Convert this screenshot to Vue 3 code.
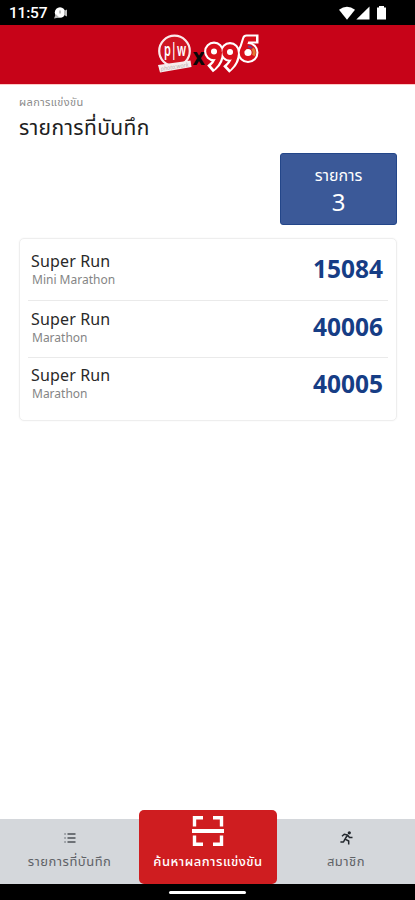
<script setup>
import { computed, ref } from 'vue'

const activeTab = ref('search')

const records = ref([
  { bib: '15084', event: 'Super Run', distance: 'Mini Marathon' },
  { bib: '40006', event: 'Super Run', distance: 'Marathon' },
  { bib: '40005', event: 'Super Run', distance: 'Marathon' },
])

const total = computed(() => records.value.length)
</script>

<template>
  <div class="screen">
    <div class="status-bar">
      <span class="clock">11:57</span>
      <svg class="status-note" width="16" height="14" viewBox="0 0 16 14">
        <circle cx="7" cy="6.5" r="5.2" fill="#fff" />
        <path d="M1 12.5 2.8 8l3.5 3.5zM11 5l3-1.5v7L11 9z" fill="#bbb" />
        <path d="M7 4.5v3" stroke="#888" stroke-width="1" />
      </svg>
      <svg class="status-icons" width="49" height="15" viewBox="0 0 49 15">
        <path d="M0 3.8Q8 -2.4 16 3.8L8 13.7z" fill="#fff" />
        <path d="M30.5.5v13H17.3z" fill="#fff" />
        <path d="M38 1.5h2V0h5v1.5h2v12h-9z" fill="#fff" />
      </svg>
    </div>

    <header class="brand">
      <svg width="104" height="48" viewBox="0 0 104 48">
        <circle cx="17.5" cy="19" r="15.3" fill="#cf1522" stroke="#fbeaea" stroke-width="2.2" />
        <text x="7" y="24" class="logo-pw" textLength="22" lengthAdjust="spacingAndGlyphs">p|w</text>
        <path d="M1 33 33.5 28.5 34.5 35 3 40.5z" fill="#f7eeee" />
        <text x="4" y="39" class="logo-sub" transform="rotate(-9 4 39)" textLength="28" lengthAdjust="spacingAndGlyphs">photo:work</text>
        <text x="35.5" y="33" class="logo-x" textLength="12.5" lengthAdjust="spacingAndGlyphs">x</text>
        <g fill="none" stroke-linejoin="round">
          <g stroke="#fff" stroke-width="9" stroke-linecap="square">
            <path d="M62.8 20Q62.5 29 56.5 34" />
            <circle cx="57" cy="19.5" r="5.4" />
            <path d="M78.8 20.5Q78.5 29 72.5 34.5" />
            <circle cx="73" cy="20" r="5.4" />
            <path d="M97 7H89.5L86 18" />
            <circle cx="91" cy="20.5" r="6" />
          </g>
          <g stroke="#d80f1c" stroke-width="4.8">
            <path d="M62.6 20Q62.5 29 55.5 35.5" />
            <circle cx="57" cy="19.5" r="5.4" />
            <path d="M78.6 20.5Q78.5 29 71.5 36" />
            <circle cx="73" cy="20" r="5.4" />
            <path d="M99 7H89.5L86 18" />
            <circle cx="91" cy="20.5" r="6" />
          </g>
          <g fill="#fff">
            <circle cx="57" cy="19.5" r="2.5" />
            <circle cx="73" cy="20" r="2.5" />
            <circle cx="91" cy="20.5" r="2.8" />
          </g>
          <path d="M95.5 16.5A6 6 0 0 1 96.4 23.5" stroke="#e07a35" stroke-width="3" />
          <path d="M91 14.5A6 6 0 0 1 95 16" stroke="#6b3f86" stroke-width="2" />
        </g>
      </svg>
    </header>

    <main class="content">
      <p class="eyebrow">ผลการแข่งขัน</p>
      <h1>รายการที่บันทึก</h1>

      <section class="count-card">
        <p>รายการ</p>
        <strong>{{ total }}</strong>
      </section>

      <section class="record-list">
        <article v-for="item in records" :key="item.bib" class="record">
          <div class="record-info">
            <h2>{{ item.event }}</h2>
            <p>{{ item.distance }}</p>
          </div>
          <span class="bib">{{ item.bib }}</span>
        </article>
      </section>
    </main>

    <nav class="tab-bar">
      <button class="tab" @click="activeTab = 'records'">
        <svg width="12" height="10" viewBox="0 0 12 10">
          <path d="M3.5 1h8M3.5 5h8M3.5 9h8" stroke="#4c5157" stroke-width="1.5" />
          <path d="M.3 1h1.5M.3 5h1.5M.3 9h1.5" stroke="#7c8187" stroke-width="1.3" />
        </svg>
        <span>รายการที่บันทึก</span>
      </button>
      <button class="tab scan" @click="activeTab = 'search'">
        <svg width="32" height="30" viewBox="0 0 32 30">
          <path
            d="M2.5 10.5V1.8H11M21 1.8h8.5v8.7M2.5 19.5v8.7H11M21 28.2h8.5v-8.7"
            fill="none"
            stroke="#fff"
            stroke-width="3.4"
          />
          <path d="M0 15h32" stroke="#fff" stroke-width="4" />
        </svg>
        <span>ค้นหาผลการแข่งขัน</span>
      </button>
      <button class="tab member" @click="activeTab = 'member'">
        <svg width="13" height="14" viewBox="0 0 13 14">
          <circle cx="9.3" cy="1.8" r="1.6" fill="#22272d" />
          <path
            d="M2 5.2 4.2 3.3 7.5 4 5 8.2 8.7 10v3.5M7.5 4l2 2.5h3M4.8 8.4 3.5 11H.4"
            fill="none"
            stroke="#22272d"
            stroke-width="1.5"
            stroke-linejoin="round"
          />
        </svg>
        <span>สมาชิก</span>
      </button>
    </nav>
    <div class="system-bar"><i></i></div>
  </div>
</template>

<style>
body {
  margin: 0;
}
</style>

<style scoped>
.screen {
  width: 415px;
  height: 900px;
  display: flex;
  flex-direction: column;
  overflow: hidden;
  background: #fff;
  font-family: 'Noto Sans', 'Noto Sans Thai', 'Open Sans', sans-serif;
}

h1,
h2,
p {
  margin: 0;
  font-weight: 400;
  white-space: nowrap;
}

.status-bar {
  height: 25px;
  flex: none;
  box-sizing: border-box;
  padding: 1px 27px 0 9px;
  display: flex;
  align-items: center;
  background: #000;
}

.clock {
  color: #fff;
  font: 500 15.5px/25px Roboto, sans-serif;
  letter-spacing: -0.2px;
  width: 43px;
}

.status-note {
  margin-left: 1px;
}

.status-icons {
  margin-left: auto;
}

.brand {
  height: 60px;
  flex: none;
  box-sizing: border-box;
  padding: 7px 0 0 157px;
  background: #c70318;
  border-bottom: 1px solid #ffc9c6;
}

.brand svg {
  display: block;
}

.logo-pw {
  font: 600 18px 'Noto Sans', sans-serif;
  fill: #fff;
}

.logo-sub {
  font: italic 6px 'Noto Sans', sans-serif;
  fill: #bcaead;
}

.logo-x {
  font: 700 23px 'DejaVu Sans', sans-serif;
  fill: #080808;
}

.content {
  flex: 1;
  min-height: 0;
  padding: 8px 18px 0 19px;
}

.eyebrow {
  height: 18px;
  line-height: 18px;
  font-size: 11px;
  letter-spacing: 0.4px;
  color: #8b8b8b;
}

h1 {
  height: 32px;
  line-height: 32px;
  font-size: 21px;
  letter-spacing: 0.4px;
  color: #202020;
}

.count-card {
  width: 117px;
  height: 72px;
  box-sizing: border-box;
  margin: 10px 0 0 auto;
  padding-top: 10px;
  display: flex;
  flex-direction: column;
  align-items: center;
  color: #fff;
  background: #3b5998;
  border: 1px solid #234689;
  border-radius: 3px;
}

.count-card p {
  font-size: 16px;
  line-height: 22px;
}

.count-card strong {
  font-size: 24px;
  line-height: 32px;
  font-weight: 400;
}

.record-list {
  height: 183px;
  box-sizing: border-box;
  margin-top: 13px;
  padding: 4px 8px;
  border: 1px solid #eee;
  border-radius: 5px;
  box-shadow: 0 0 2px #f1f1f1;
}

.record {
  height: 57px;
  box-sizing: border-box;
  display: flex;
  justify-content: space-between;
  padding: 8px 5px 0 3px;
}

.record:not(:last-child) {
  border-bottom: 1px solid #eaeaea;
}

.record:first-child {
  height: 58px;
}

.record:last-child {
  padding-top: 7px;
}

.record-info h2 {
  font-size: 16px;
  line-height: 20px;
  letter-spacing: 0.15px;
  color: #292929;
}

.record-info p {
  padding-left: 1px;
  font-size: 12px;
  line-height: 17px;
  color: #858585;
}

.record:last-child p {
  line-height: 18px;
}

.bib {
  font-size: 24.5px;
  line-height: 36px;
  font-weight: 700;
  color: #163d85;
}

.record:last-child .bib {
  line-height: 38px;
}

.tab-bar {
  height: 65px;
  flex: none;
  display: grid;
  grid-template-columns: 139px 138px 138px;
  background: #d4d7db;
}

.tab {
  min-width: 0;
  padding: 14px 0 0;
  border: 0;
  background: transparent;
  color: #5f6267;
  font: inherit;
  font-size: 13px;
  letter-spacing: 0.5px;
  display: flex;
  flex-direction: column;
  align-items: center;
  white-space: nowrap;
}

.tab svg {
  flex: none;
}

.tab.member svg {
  margin-top: -2px;
}

.tab span {
  line-height: 18px;
  margin-top: auto;
  padding-bottom: 14px;
}

.tab.scan {
  height: 74px;
  margin-top: -9px;
  padding-top: 6px;
  border-radius: 5px;
  background: #cf1d20;
  color: #fff;
  font-weight: 500;
  position: relative;
  z-index: 1;
}

.system-bar {
  height: 16px;
  flex: none;
  display: flex;
  justify-content: center;
  background: #000;
}

.system-bar i {
  width: 77px;
  height: 3px;
  margin-top: 7px;
  border-radius: 2px;
  background: #fff;
}
</style>
